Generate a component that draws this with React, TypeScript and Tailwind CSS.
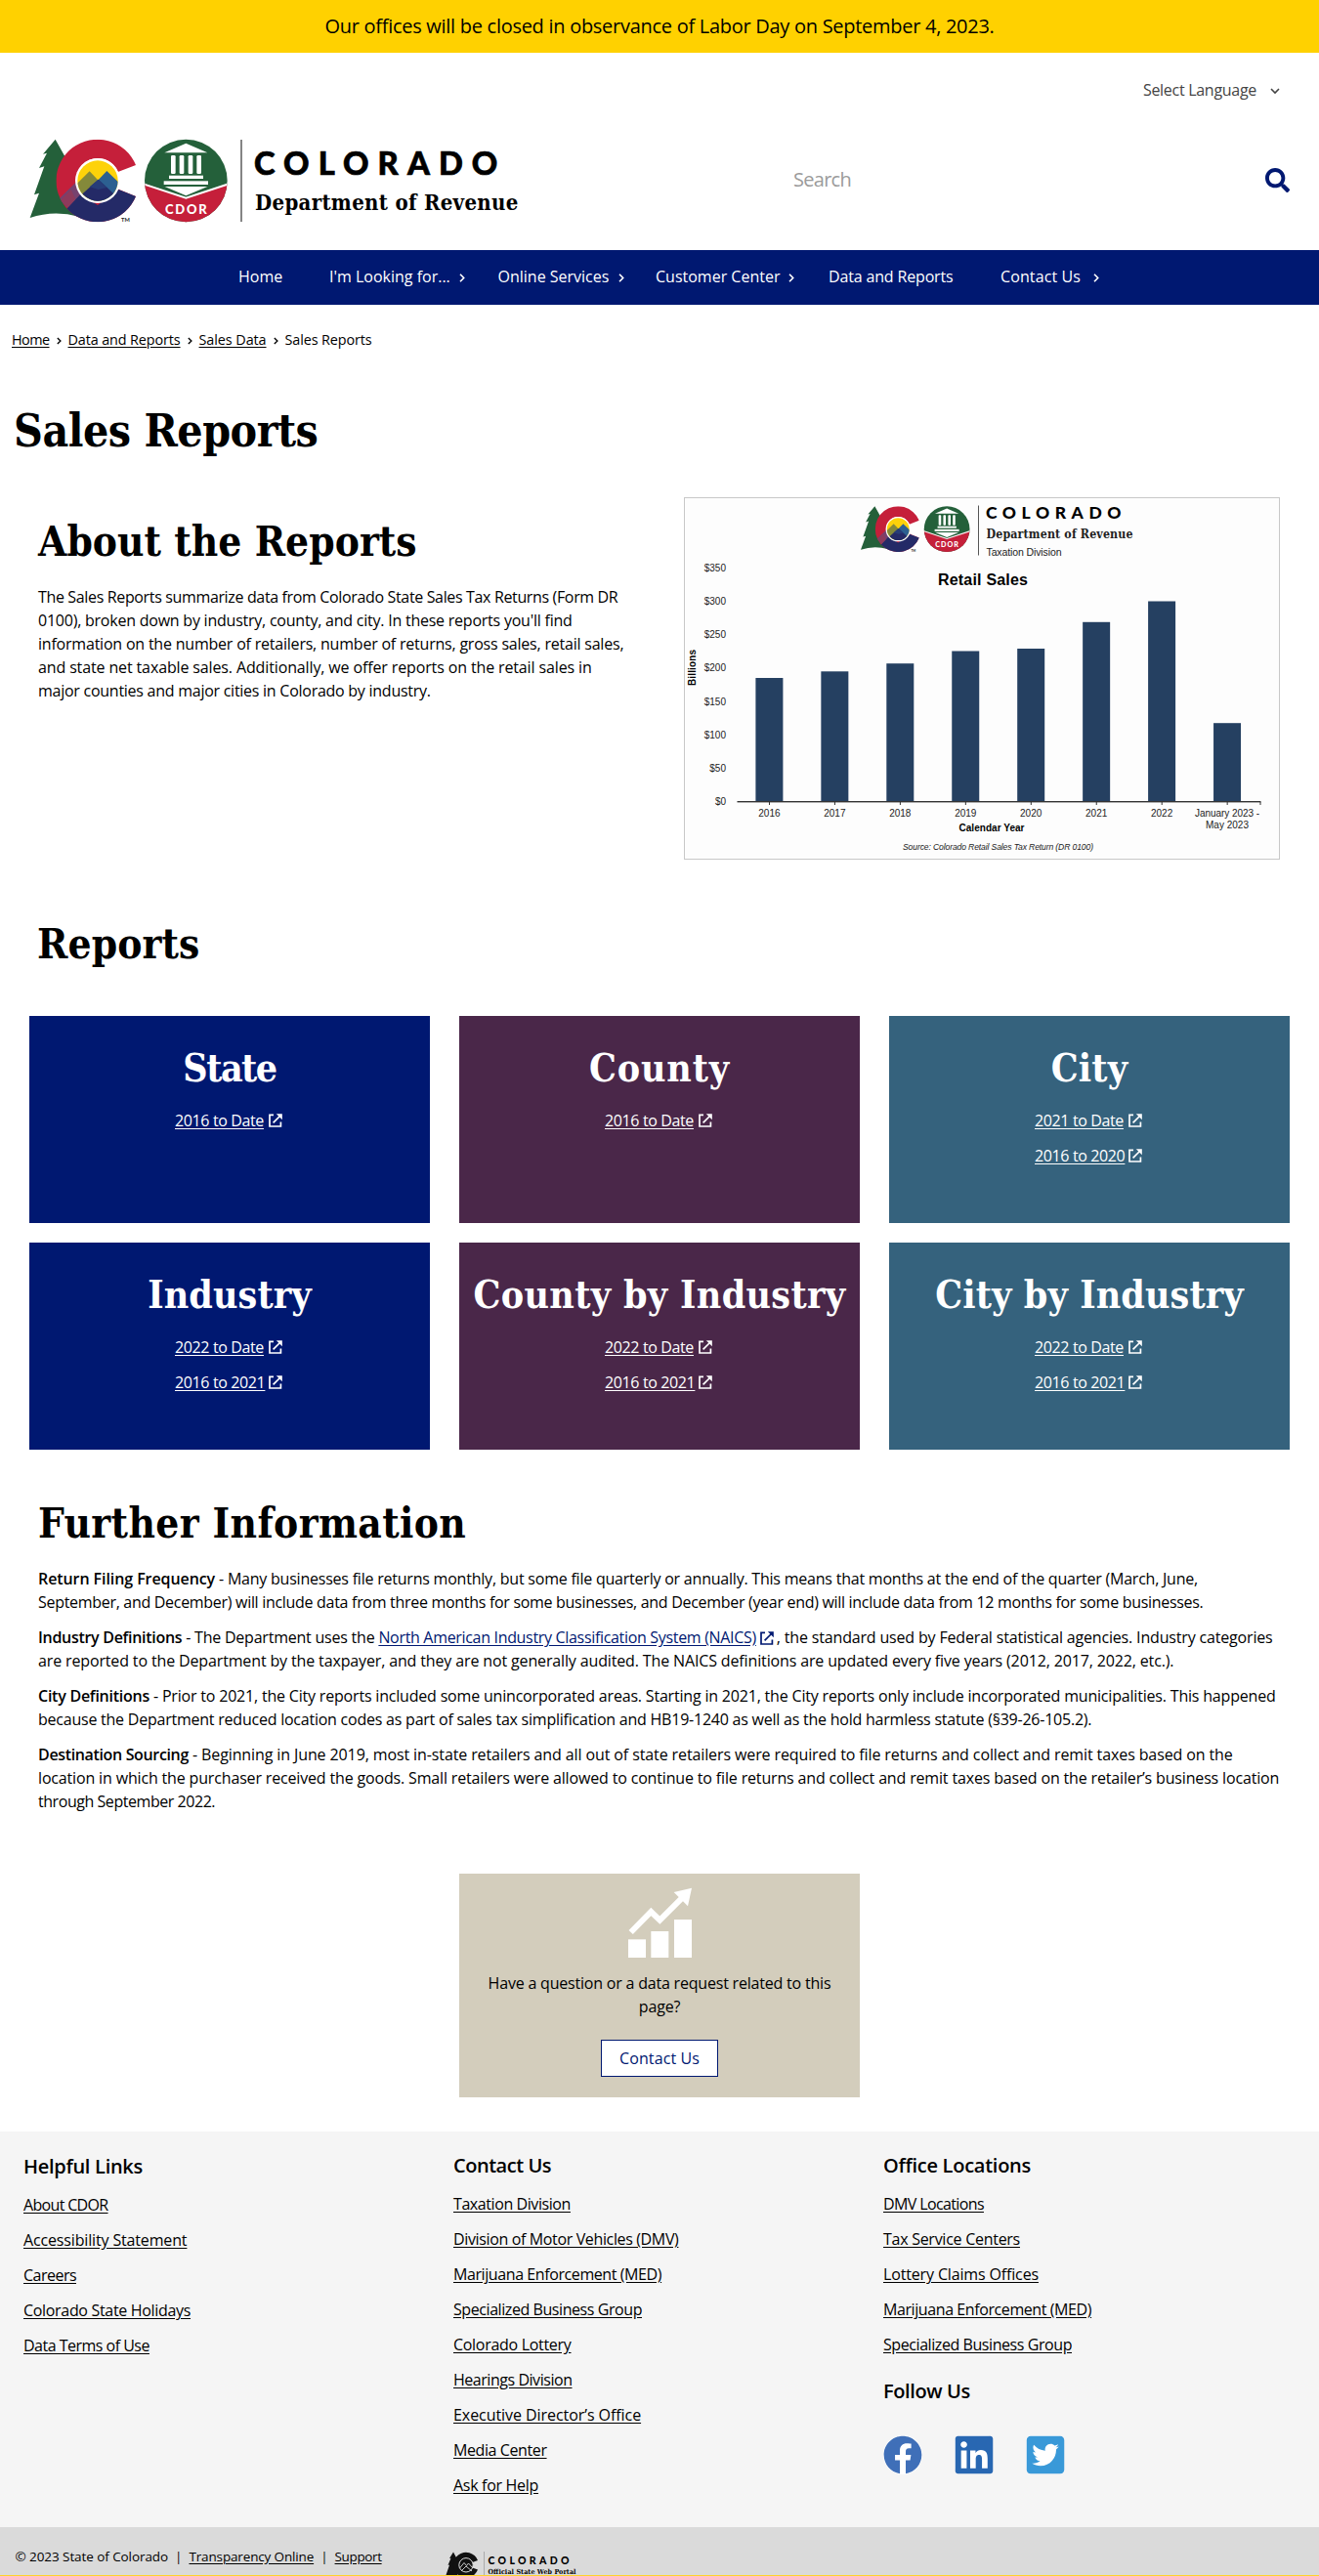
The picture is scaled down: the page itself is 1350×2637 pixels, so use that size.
import type { ReactNode } from "react";
import { FaFacebook, FaLinkedin, FaSearch, FaTwitterSquare } from "react-icons/fa";

const SLAB = "'DejaVu Serif Condensed','DejaVu Serif',serif";

type Link = { text: string; track: string };

/* ---------- small drawings ---------- */

function ExternalIcon({ className = "" }: { className?: string }) {
  return (
    <svg viewBox="0 0 14 14" className={`h-[14px] w-[14px] shrink-0 ${className}`} fill="none" stroke="currentColor" strokeWidth="1.7">
      <path d="M5 1.4H1v11.6h11.4V8.6" />
      <path d="M4.6 9.4 12 2" />
      <path d="M7.8 .2h6v6z" fill="currentColor" stroke="none" />
    </svg>
  );
}

function Caret({ className = "" }: { className?: string }) {
  return (
    <svg viewBox="0 0 6 9" className={`shrink-0 ${className}`} fill="none" stroke="currentColor" strokeWidth="1.6">
      <path d="M1 .8 4.7 4.5 1 8.2" />
    </svg>
  );
}

function LogoMark() {
  return (
    <g>
      <clipPath id="disc">
        <circle cx="240" cy="165" r="62" />
      </clipPath>
      <clipPath id="letterC">
        <path d="M357 117A127 127 0 1 0 357 213L300 190A66 66 0 1 1 302 138Z" />
      </clipPath>
      <clipPath id="seal">
        <circle cx="511" cy="165" r="127" />
      </clipPath>
      <path d="M110 38 72 83 84 80 60 126 76 121 45 208 60 203 32 279Q105 254 182 275L200 200 139 90Z" fill="#24603a" />
      <g clipPath="url(#letterC)">
        <rect x="100" y="30" width="280" height="270" fill="#c51f3a" />
        <path d="M120 222 178 165 200 200 150 250Z" fill="#76426f" />
        <path d="M145 250 188 206 240 240 305 192 380 220V300H170Z" fill="#242a67" />
        <path d="M126 225 158 192 172 222 148 248Z" fill="#8d3a5c" />
      </g>
      <circle cx="240" cy="165" r="69" fill="#fff" />
      <g clipPath="url(#disc)">
        <rect x="170" y="95" width="140" height="140" fill="#fdd20a" />
        <path d="M165 185 215 136 262 185V240H165Z" fill="#84893a" />
        <path d="M220 185 268 135 320 185V240H220Z" fill="#2c6091" />
        <path d="M170 226 242 161 312 226V260H170Z" fill="#242a67" />
        <path d="M215 184 242 161 268 186 242 192Z" fill="#263c78" />
      </g>
      <g clipPath="url(#seal)">
        <rect x="380" y="30" width="262" height="270" fill="#24603a" />
        <path d="M380 173 511 217 642 173V300H380Z" fill="#c51f3a" />
        <path d="M380 175 511 218 642 175" fill="none" stroke="#fff" strokeWidth="6" />
      </g>
      <g fill="#fff">
        <path d="M445 79 511 50 577 79Z" />
        <rect x="465" y="87" width="14" height="57" rx="4" />
        <rect x="491" y="87" width="14" height="57" rx="4" />
        <rect x="518" y="87" width="14" height="57" rx="4" />
        <rect x="544" y="87" width="14" height="57" rx="4" />
        <rect x="459" y="149" width="105" height="10" />
        <rect x="443" y="166" width="136" height="11" />
        <path d="M446 183H577L511 211Z" />
        <text x="447" y="266" fontFamily="Lato,sans-serif" fontWeight="900" fontSize="39" textLength="128">CDOR</text>
      </g>
      <text x="312" y="290" fontFamily="Lato,sans-serif" fontWeight="700" fontSize="17" fill="#222">TM</text>
    </g>
  );
}

function Logo() {
  return (
    <svg viewBox="0 0 1560 330" className="h-[110px] w-[520px]" role="img" aria-label="Colorado Department of Revenue">
      <LogoMark />
      <rect x="679" y="39" width="4" height="252" fill="#4a4a4a" />
      <text x="720" y="147" fontFamily="Lato,sans-serif" fontWeight="900" fontSize="98" stroke="#000" strokeWidth="2" textLength="748">COLORADO</text>
      <text x="723" y="255" fontFamily={SLAB} fontWeight="700" fontSize="66" textLength="808">Department of Revenue</text>
    </svg>
  );
}

/* ---------- retail sales chart ---------- */

const BARS = [
  { label: "2016", top: 694 },
  { label: "2017", top: 687.3 },
  { label: "2018", top: 679.2 },
  { label: "2019", top: 666.5 },
  { label: "2020", top: 664 },
  { label: "2021", top: 636.8 },
  { label: "2022", top: 615.5 },
  { label: "", top: 740.2 },
];
const TICKS = ["$350", "$300", "$250", "$200", "$150", "$100", "$50", "$0"];

function RetailSalesChart() {
  return (
    <svg viewBox="700 509 610 371" className="h-[371px] w-[610px]" fontFamily="'Liberation Sans',Arial,sans-serif" fontSize="10" fill="#222">
      <rect x="700.5" y="509.5" width="609" height="370" fill="#fdfdfd" stroke="#c8c8c8" />
      <g transform="translate(875.1 511.3) scale(.184)">
        <LogoMark />
      </g>
      <rect x="1001" y="517.5" width="1" height="51" fill="#555" />
      <text x="1009" y="531" fontFamily="Lato,sans-serif" fontWeight="900" fontSize="17.5" fill="#000" textLength="138.5">COLORADO</text>
      <text x="1009.5" y="550.7" fontFamily={SLAB} fontWeight="700" fontSize="12.3" textLength="150">Department of Revenue</text>
      <text x="1009.5" y="569" textLength="77" fontSize="10.5">Taxation Division</text>
      <text x="960" y="599.3" fontWeight="700" fontSize="16" fill="#000" textLength="92">Retail Sales</text>
      {TICKS.map((t, i) => (
        <text key={t} x="743" y={585 + i * 34.15} textAnchor="end">{t}</text>
      ))}
      <text transform="translate(712 702) rotate(-90)" fontWeight="700" textLength="37" fill="#000">Billions</text>
      {BARS.map((b, i) => (
        <g key={i}>
          <rect x={773.4 + i * 66.95} y={b.top} width="28" height={820.7 - b.top} fill="#254061" />
          <rect x={787 + i * 66.95} y="821" width="1" height="3" fill="#333" />
          <text x={787.4 + i * 66.95} y="835.8" textAnchor="middle">{b.label}</text>
        </g>
      ))}
      <rect x="754.5" y="820" width="536" height="1.4" fill="#333" />
      <rect x="1289.5" y="821" width="1" height="3" fill="#333" />
      <text x="1223" y="835.8" textLength="66">January 2023 -</text>
      <text x="1234" y="847.5" textLength="44">May 2023</text>
      <text x="981.5" y="851" fontWeight="700" textLength="67" fill="#000">Calendar Year</text>
      <text x="924" y="870" fontSize="8.6" fontStyle="italic" textLength="195">Source: Colorado Retail Sales Tax Return (DR 0100)</text>
    </svg>
  );
}

/* ---------- header ---------- */

const NAV = [
  { text: "Home", width: "w-[93px]", caret: "" },
  { text: "I'm Looking for...", width: "w-[172.5px]", caret: "ml-[9px]" },
  { text: "Online Services", width: "w-[161.5px]", caret: "ml-[10px]" },
  { text: "Customer Center", width: "w-[177px]", caret: "ml-[9px]" },
  { text: "Data and Reports", width: "w-[176px] tracking-[-0.16px]", caret: "" },
  { text: "Contact Us", width: "w-[110px] tracking-[0.11px]", caret: "ml-[13px]" },
];

function Header() {
  return (
    <header>
      <div className="flex h-[54px] items-center justify-center bg-[#ffd100] text-[20px] tracking-[-0.28px] text-black">
        Our offices will be closed in observance of Labor Day on September 4, 2023.
      </div>
      <div className="flex h-[76px] items-center justify-end pr-[40px] text-[#444]">
        <span className="tracking-[-0.29px]">Select Language</span>
        <svg viewBox="0 0 10 7" className="mt-[2px] ml-[14px] h-[7px] w-[10px]" fill="none" stroke="currentColor" strokeWidth="1.6">
          <path d="M1 1l4 4 4-4" />
        </svg>
      </div>
      <div className="flex h-[126px] items-start pl-[20px]">
        <Logo />
        <div className="ml-[272px] flex h-[108px] w-[508px] items-center justify-between text-[#001871]">
          <span className="text-[20px] tracking-[-0.72px] text-[#9b9b9b]">Search</span>
          <FaSearch size={25} />
        </div>
      </div>
      <nav className="flex h-[56px] items-center bg-[#001871] pb-[2px] pl-[244px] text-white">
        {NAV.map((n) => (
          <span key={n.text} className={`flex items-center whitespace-nowrap ${n.width}`}>
            {n.text}
            {n.caret && <Caret className={`mt-[3px] h-[9px] w-[6px] ${n.caret}`} />}
          </span>
        ))}
      </nav>
      <div className="flex h-[70px] items-center pt-px pl-[12px] text-[14.4px]">
        <a className="tracking-[-0.54px] underline underline-offset-2">Home</a>
        <Caret className="mx-[7px] mt-[2px] h-[8px] w-[5px]" />
        <a className="tracking-[-0.12px] underline underline-offset-2">Data and Reports</a>
        <Caret className="mx-[7px] mt-[2px] h-[8px] w-[5px]" />
        <a className="tracking-[-0.08px] underline underline-offset-2">Sales Data</a>
        <Caret className="mx-[7px] mt-[2px] h-[8px] w-[5px]" />
        <span className="tracking-[-0.11px]">Sales Reports</span>
      </div>
    </header>
  );
}

/* ---------- report cards ---------- */

const HEADING = "font-['DejaVu_Serif_Condensed','DejaVu_Serif',serif] font-bold whitespace-nowrap";

const CARDS = [
  { title: "State", track: "tracking-[-1.5px]", bg: "bg-[#001871]", links: ["2016 to Date"] },
  { title: "County", track: "tracking-[0.8px]", bg: "bg-[#4a2749]", links: ["2016 to Date"] },
  { title: "City", track: "tracking-[0.2px]", bg: "bg-[#35627d]", links: ["2021 to Date", "2016 to 2020"] },
  { title: "Industry", track: "tracking-[0.1px]", bg: "bg-[#001871]", links: ["2022 to Date", "2016 to 2021"] },
  { title: "County by Industry", track: "tracking-[0.33px]", bg: "bg-[#4a2749]", links: ["2022 to Date", "2016 to 2021"] },
  { title: "City by Industry", track: "tracking-[0.1px]", bg: "bg-[#35627d]", links: ["2022 to Date", "2016 to 2021"] },
];

function ReportCards() {
  return (
    <div className="mt-[40px] grid grid-cols-3 grid-rows-[212px_212px] gap-x-[30px] gap-y-[20px] px-[30px] text-white">
      {CARDS.map((c) => (
        <div key={c.title} className={`flex flex-col items-center pt-[33px] ${c.bg}`}>
          <h3 className={`mb-[16px] text-[39px] leading-[40px] ${HEADING} ${c.track}`}>{c.title}</h3>
          {c.links.map((l) => (
            <a key={l} className="flex h-[36px] items-center gap-[4px] pr-[2px] tracking-[-0.37px]">
              <span className="w-[92px] whitespace-nowrap underline underline-offset-2">{l}</span>
              <ExternalIcon />
            </a>
          ))}
        </div>
      ))}
    </div>
  );
}

/* ---------- text ---------- */

function Line({ track, children }: { track: string; children: ReactNode }) {
  return <span className={`block whitespace-nowrap ${track}`}>{children}</span>;
}

function Term({ track, children }: { track: string; children: ReactNode }) {
  return <b className={`font-semibold ${track}`}>{children}</b>;
}

function FurtherInformation() {
  return (
    <section className="px-[39px] pt-[40px]">
      <h2 className={`h-[80px] text-[42px] leading-[72px] tracking-[0.38px] ${HEADING}`}>Further Information</h2>
      <div className="flex flex-col gap-[12px] leading-[24px]">
        <p>
          <Line track="tracking-[-0.22px]">
            <Term track="tracking-[-0.08px]">Return Filing Frequency</Term> - Many businesses file returns monthly, but some file quarterly or annually. This means that months at the end of the quarter (March, June,
          </Line>
          <Line track="tracking-[-0.3px]">
            September, and December) will include data from three months for some businesses, and December (year end) will include data from 12 months for some businesses.
          </Line>
        </p>
        <p>
          <Line track="tracking-[-0.17px]">
            <Term track="tracking-[-0.3px]">Industry Definitions</Term>
            <span className="tracking-[-0.22px]"> - The Department uses the </span>
            <a className="tracking-[-0.32px] text-[#001871] underline underline-offset-2">North American Industry Classification System (NAICS)</a>
            <ExternalIcon className="mr-[3px] ml-[4px] inline-block align-[-2px] text-[#001871]" />, the standard used by Federal statistical agencies. Industry categories
          </Line>
          <Line track="tracking-[-0.14px]">
            are reported to the Department by the taxpayer, and they are not generally audited. The NAICS definitions are updated every five years (2012, 2017, 2022, etc.).
          </Line>
        </p>
        <p>
          <Line track="tracking-[-0.19px]">
            <Term track="tracking-[-0.25px]">City Definitions</Term> - Prior to 2021, the City reports included some unincorporated areas. Starting in 2021, the City reports only include incorporated municipalities. This happened
          </Line>
          <Line track="tracking-[-0.23px]">
            because the Department reduced location codes as part of sales tax simplification and HB19-1240 as well as the hold harmless statute (§39-26-105.2).
          </Line>
        </p>
        <p>
          <Line track="tracking-[-0.11px]">
            <Term track="tracking-[-0.35px]">Destination Sourcing</Term> - Beginning in June 2019, most in-state retailers and all out of state retailers were required to file returns and collect and remit taxes based on the
          </Line>
          <Line track="tracking-[-0.16px]">
            location in which the purchaser received the goods. Small retailers were allowed to continue to file returns and collect and remit taxes based on the retailer’s business location
          </Line>
          <Line track="tracking-[-0.45px]">through September 2022.</Line>
        </p>
      </div>
    </section>
  );
}

function ContactBox() {
  return (
    <section className="mx-auto mt-[62px] flex h-[228.500px] w-[410px] flex-col items-center bg-[#d3cdbc] pt-[14px]">
      <svg viewBox="608 95 195 216" className="h-[72px] w-[65px]" fill="#fff">
        <rect x="608" y="255" width="54" height="56" />
        <rect x="678" y="230" width="54" height="81" />
        <rect x="749" y="194" width="54" height="117" />
        <path d="M616 233 678 170 705 196 777 124" fill="none" stroke="#fff" strokeWidth="18" />
        <path d="M803 97 748 110 791 153Z" />
      </svg>
      <p className="mt-[14px] text-center leading-[24px] tracking-[-0.2px]">
        Have a question or a data request related to this
        <br />
        page?
      </p>
      <a className="mt-[22px] flex h-[38px] w-[120px] items-center justify-center border border-[#001871] bg-white tracking-[0.11px] text-[#001871]">
        Contact Us
      </a>
    </section>
  );
}

/* ---------- footer ---------- */

const HELPFUL: Link[] = [
  { text: "About CDOR", track: "tracking-[-0.67px]" },
  { text: "Accessibility Statement", track: "tracking-[-0.15px]" },
  { text: "Careers", track: "tracking-[-0.52px]" },
  { text: "Colorado State Holidays", track: "tracking-[-0.32px]" },
  { text: "Data Terms of Use", track: "tracking-[-0.51px]" },
];
const CONTACT: Link[] = [
  { text: "Taxation Division", track: "tracking-[-0.42px]" },
  { text: "Division of Motor Vehicles (DMV)", track: "tracking-[-0.36px]" },
  { text: "Marijuana Enforcement (MED)", track: "tracking-[-0.41px]" },
  { text: "Specialized Business Group", track: "tracking-[-0.425px]" },
  { text: "Colorado Lottery", track: "tracking-[-0.3px]" },
  { text: "Hearings Division", track: "tracking-[-0.46px]" },
  { text: "Executive Director’s Office", track: "tracking-[-0.06px]" },
  { text: "Media Center", track: "tracking-[-0.4px]" },
  { text: "Ask for Help", track: "tracking-[-0.3px]" },
];
const OFFICES: Link[] = [
  { text: "DMV Locations", track: "tracking-[-0.62px]" },
  { text: "Tax Service Centers", track: "tracking-[-0.27px]" },
  { text: "Lottery Claims Offices", track: "tracking-[-0.15px]" },
  { text: "Marijuana Enforcement (MED)", track: "tracking-[-0.41px]" },
  { text: "Specialized Business Group", track: "tracking-[-0.425px]" },
];

function LinkList({ title, titleTrack, links }: { title: string; titleTrack: string; links: Link[] }) {
  return (
    <>
      <h2 className={`mb-[2px] text-[20px] leading-[38px] font-semibold ${titleTrack}`}>{title}</h2>
      {links.map((l) => (
        <div key={l.text} className="leading-[36px]">
          <a className={`underline underline-offset-2 ${l.track}`}>{l.text}</a>
        </div>
      ))}
    </>
  );
}

function StatePortalLogo() {
  return (
    <svg viewBox="0 0 140 24" className="h-[24px] w-[140px] self-start" aria-label="Colorado Official State Web Portal">
      <path d="M8 .5 4 7l1.500-.3L2.500 14l1.600-.4L.5 24H12V8Z" fill="#111" />
      <path d="M33 9A13 13 0 1 0 33 18.500L27.500 16.500A7 7 0 1 1 27.500 11Z" fill="#111" />
      <circle cx="21" cy="13.800" r="7.200" fill="#111" stroke="#dadada" strokeWidth="1" />
      <path d="M14.500 17 19 11.500 21.500 14.500 23.500 12 28 17M16 20l5-5 6 5" fill="none" stroke="#dadada" strokeWidth=".9" />
      <rect x="39" y="0" width="1" height="24" fill="#aaa" />
      <text x="43.500" y="12.600" fontFamily="Lato,sans-serif" fontWeight="900" fontSize="10.500" textLength="83">COLORADO</text>
      <text x="43.500" y="23" fontFamily={SLAB} fontWeight="700" fontSize="7" textLength="90">Official State Web Portal</text>
    </svg>
  );
}

function Footer() {
  return (
    <footer className="mt-[35.500px]">
      <div className="grid h-[405px] grid-cols-[440px_440px_1fr] bg-[#f5f5f5] pt-[16px] pl-[24px]">
        <div className="pt-px">
          <LinkList title="Helpful Links" titleTrack="tracking-[-0.28px]" links={HELPFUL} />
        </div>
        <div>
          <LinkList title="Contact Us" titleTrack="tracking-[-0.47px]" links={CONTACT} />
        </div>
        <div>
          <LinkList title="Office Locations" titleTrack="tracking-[-0.26px]" links={OFFICES} />
          <h2 className="text-[20px] leading-[60px] font-semibold tracking-[-0.4px]">Follow Us</h2>
          <div className="mt-[15px] flex gap-[34px]">
            <span className="grid h-[39px] w-[39px] place-items-center">
              <FaFacebook size={40} color="#3f6fb8" className="rounded-full bg-white" />
            </span>
            <span className="flex h-[39px] w-[39px] items-center justify-center rounded-md bg-white">
              <FaLinkedin size={44} color="#2867b2" className="shrink-0" />
            </span>
            <span className="flex h-[39px] w-[39px] items-center justify-center rounded-md bg-white">
              <FaTwitterSquare size={44} color="#3999d8" className="shrink-0" />
            </span>
          </div>
        </div>
      </div>
      <div className="flex h-[50px] items-start border-b border-[#ffd42a] bg-[#dadada] pt-[18px] text-[13.5px] leading-[24px]">
        <div className="flex w-[456px] shrink-0 gap-[7px] pl-[15.5px]">
          <span className="tracking-[-0.08px]">© 2023 State of Colorado</span>
          <span>|</span>
          <a className="tracking-[-0.15px] underline underline-offset-2">Transparency Online</a>
          <span>|</span>
          <a className="tracking-[-0.37px] underline underline-offset-2">Support</a>
        </div>
        <div className="-mb-2 pt-[7px]">
          <StatePortalLogo />
        </div>
      </div>
    </footer>
  );
}

export default function App() {
  return (
    <div className="h-[2637px] w-[1350px] overflow-hidden bg-white font-['Open_Sans',sans-serif] text-[16px] leading-[24px] text-black">
      <Header />
      <main>
        <h1 className={`h-[120px] pl-[14px] text-[46px] leading-[119px] tracking-[-0.5px] ${HEADING}`}>Sales Reports</h1>
        <section className="flex h-[434px] justify-between pr-[40px] pl-[39px]">
          <div className="pt-[10px]">
            <h2 className={`h-[87px] text-[42px] leading-[86px] tracking-[0.05px] ${HEADING}`}>About the Reports</h2>
            <p>
              <Line track="tracking-[-0.35px]">The Sales Reports summarize data from Colorado State Sales Tax Returns (Form DR</Line>
              <Line track="tracking-[-0.23px]">0100), broken down by industry, county, and city. In these reports you'll find</Line>
              <Line track="tracking-[-0.21px]">information on the number of retailers, number of returns, gross sales, retail sales,</Line>
              <Line track="tracking-[-0.13px]">and state net taxable sales. Additionally, we offer reports on the retail sales in</Line>
              <Line track="tracking-[-0.26px]">major counties and major cities in Colorado by industry.</Line>
            </p>
          </div>
          <div className="pt-[7px]">
            <RetailSalesChart />
          </div>
        </section>
        <h2 className={`h-[64px] pl-[38px] text-[42px] leading-[62px] tracking-[0.1px] ${HEADING}`}>Reports</h2>
        <ReportCards />
        <FurtherInformation />
        <ContactBox />
      </main>
      <Footer />
    </div>
  );
}
